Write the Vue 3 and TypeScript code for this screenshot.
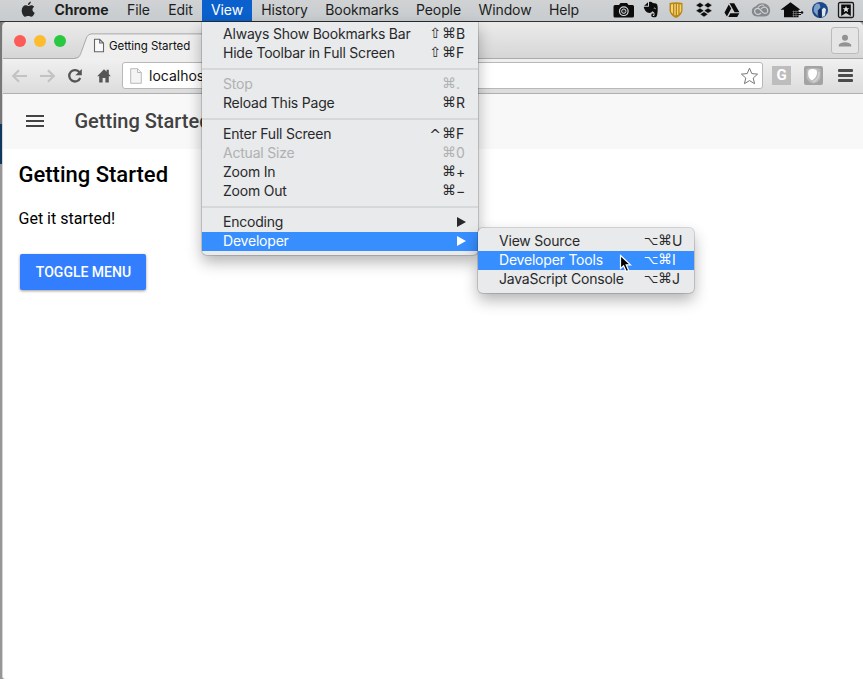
<script setup lang="ts">
interface MenuTitle {
  label: string
  width: number
  kind?: 'app' | 'open'
}

interface MenuRow {
  label?: string
  mods?: string[]
  key?: string
  disabled?: boolean
  active?: boolean
  submenu?: boolean
  separator?: boolean
}

const titles: MenuTitle[] = [
  { label: 'Chrome', width: 73, kind: 'app' },
  { label: 'File', width: 41 },
  { label: 'Edit', width: 43 },
  { label: 'View', width: 50, kind: 'open' },
  { label: 'History', width: 65 },
  { label: 'Bookmarks', width: 90 },
  { label: 'People', width: 63 },
  { label: 'Window', width: 70 },
  { label: 'Help', width: 48 },
]

const viewMenu: MenuRow[] = [
  { label: 'Always Show Bookmarks Bar', mods: ['⇧', '⌘'], key: 'B' },
  { label: 'Hide Toolbar in Full Screen', mods: ['⇧', '⌘'], key: 'F' },
  { separator: true },
  { label: 'Stop', mods: ['⌘'], key: '.', disabled: true },
  { label: 'Reload This Page', mods: ['⌘'], key: 'R' },
  { separator: true },
  { label: 'Enter Full Screen', mods: ['^', '⌘'], key: 'F' },
  { label: 'Actual Size', mods: ['⌘'], key: '0', disabled: true },
  { label: 'Zoom In', mods: ['⌘'], key: '+' },
  { label: 'Zoom Out', mods: ['⌘'], key: '−' },
  { separator: true },
  { label: 'Encoding', submenu: true },
  { label: 'Developer', submenu: true, active: true },
]

const developerMenu: MenuRow[] = [
  { label: 'View Source', mods: ['⌥', '⌘'], key: 'U' },
  { label: 'Developer Tools', mods: ['⌥', '⌘'], key: 'I', active: true },
  { label: 'JavaScript Console', mods: ['⌥', '⌘'], key: 'J' },
]
</script>

<template>
  <div class="screen">
    <header class="menubar">
      <svg class="apple" width="14" height="17" viewBox="0 0 14 17">
        <path d="M9.9 0.6C9.9 2.5 8.5 4 6.9 4.1 6.8 2.4 8.3 0.8 9.9 0.6Z" />
        <path d="M7.1 5C7.8 5 8.7 4.2 10.2 4.2c1.3 0 2.4.7 3 1.6-2.6 1.6-2.1 5 .5 6-.7 1.9-2 4-3.5 4-1.100 0-1.600-.7-3-.7s-2 .7-3 .7C2.500 15.800.700 12.500.700 9.500c0-3.200 2-5.200 4-5.200C5.700 4.300 6.500 5 7.100 5Z" />
      </svg>
      <nav class="titles">
        <span v-for="t in titles" :key="t.label" class="title" :class="t.kind" :style="{ width: t.width + 'px' }">{{ t.label }}</span>
      </nav>
      <div class="tray">
        <svg width="22" height="18" viewBox="0 0 22 18">
          <path d="M2 4H6L7.500 2H14L15.500 4H19.500Q21 4 21 5.500V15Q21 16.500 19.500 16.500H2Q.500 16.500.500 15V5.500Q.500 4 2 4Z" />
          <circle cx="10.800" cy="10.200" r="4.300" fill="none" stroke="#d4d7da" stroke-width="1.200" />
          <circle cx="10.800" cy="10.200" r="2.200" fill="#2c2c2c" stroke="#d4d7da" stroke-width="1" />
        </svg>
        <svg class="elephant" width="16" height="18" viewBox="0 0 16 18">
          <path d="M5 1.200V4.800H1.200ZM6 .900Q9 .500 9.700 2L13 2.600Q14.600 3 14.700 7 14.800 16.300 12.300 16.300H10.200Q8.100 16.300 8.200 14 8.400 12.300 10.500 12.300V13.900H9.800V15H11.200Q12.200 12.800 11 11.300L9.200 10.300Q8.800 12 6.500 12 1.800 11.700.700 5.800H5.600L6 5.300Z" />
          <path d="M10.800 7.500Q11.700 6.400 12.700 7.800" fill="none" stroke="#cfd2d5" stroke-width=".9" />
        </svg>
        <svg class="shield" width="16" height="18" viewBox="0 0 16 18">
          <path d="M1.500 2Q8 .500 14.500 2V10Q13.500 14.500 8 17 2.500 14.500 1.500 10Z" fill="#b98517" />
          <path d="M3 3.400V10.800L5 13V3.100ZM6.300 3V14.200H7.700V2.900ZM9 2.900V14.200L10.300 13.600V3ZM11.600 3.200V12.400L13.200 10.300V3.400Z" fill="#f5d274" />
        </svg>
        <svg class="box" width="18" height="18" viewBox="0 0 18 18">
          <path d="M5 1.500 9 4.200 5 6.900.800 4.200ZM13 1.500 17.200 4.200 13 6.900 9 4.200ZM5 7.100 9 9.700 5 12.300.800 9.700ZM13 7.100 17.200 9.700 13 12.300 9 9.700ZM5 13.200 9 10.700 13 13.200 9 16Z" stroke="#cfd2d5" stroke-width=".5" />
        </svg>
        <svg class="drive" width="18" height="18" viewBox="0 0 18 18">
          <path d="M6.500 2.200H11.200L16.400 11.300H11.600ZM5.800 3.400 8.200 7.600 3.900 15.600 1.500 11.600ZM7.400 12.300H16.300L14.200 16H5.300Z" />
        </svg>
        <svg class="cloud" width="20" height="18" viewBox="0 0 20 18">
          <path d="M6 15.500Q.800 15 .800 10.200 1 6.200 5 5.300 7 2.300 11 2.300 18.800 2.800 19.200 9 19 15.500 13.500 15.500Z" fill="#85898c" />
          <path d="M10 12Q7.300 14.300 5 12.700 2.600 10.500 4.400 8.200 6.600 6.500 9 8.500L12.200 11.800Q14.800 13.500 16.500 11 17.500 7.500 14.400 6.200 12 5.500 10 8M7 6.500Q9.500 2.900 13 4.500" fill="none" stroke="#d0d3d6" stroke-width="1.200" />
        </svg>
        <svg width="24" height="18" viewBox="0 0 24 18">
          <path d="M10.500 1.200 20.500 8.700H18.500V16.300H4V8.700H.500Z" />
          <path d="M12.500 10.500H18M12.500 12.500H18M12.500 14.500H18M13.500 9.500V16M16 9.500V16" stroke="#8a8c8e" stroke-width=".6" />
          <path d="M18 11.500H23M18 13.500H21" stroke="#111" />
          <circle cx="22" cy="11.500" r="1.300" />
        </svg>
        <svg class="globe" width="18" height="18" viewBox="0 0 18 18">
          <circle cx="9" cy="9" r="8" fill="#1d4887" />
          <path d="M5.500 2.500Q2 5.500 2.800 10.500L6.500 15Q7 12 6.800 9.500L9.500 6.300 8.500 3Z" fill="#7d9fca" />
          <path d="M10.800 8.500 13 6.600 15 8.300 14 14.500 11.200 16.300Z" fill="#dbe5ef" />
          <path d="M7 9.500 10.400 7.500V17H8Z" fill="#112d59" />
        </svg>
        <svg class="bookmark" width="18" height="18" viewBox="0 0 18 18">
          <rect x="1.500" y="1.500" width="15" height="15" rx="1.500" fill="none" stroke="#1b1b1b" stroke-width="1.300" />
          <path d="M4.200 3.400H13.800V15L9 12 4.200 15Z" />
          <path d="M9 4.900 10 7.300H12.500L10.500 8.800 11.200 11.200 9 9.800 6.800 11.200 7.500 8.800 5.500 7.300H8Z" fill="#e1e3e5" />
        </svg>
      </div>
    </header>

    <div class="desktop">
      <aside class="behind"></aside>
      <main class="window">
        <div class="tabstrip">
          <div class="lights"><i class="red"></i><i class="yellow"></i><i class="green"></i></div>
          <div class="tab">
            <svg class="tabshape" width="340" height="26" viewBox="0 0 340 26">
              <path d="M0 25.500C5 25 5 22 7 17L11 6Q12.500.900 17 .900H340V26H0Z" fill="#efefef" />
              <path d="M0 25C5 25 5 22 7 17L11 6Q12.500.900 17 .900H340" fill="none" stroke="#a8a8a8" />
            </svg>
            <svg width="12" height="15" viewBox="0 0 12 15">
              <path d="M1.500 1.300H6.700L10.500 5V13.700H1.500ZM6.700 1.300V5H10.500" fill="#fafafa" stroke="#666" stroke-width="1.100" />
            </svg>
            <span class="tabname">Getting Started</span>
          </div>
          <div class="profile">
            <svg width="14" height="14" viewBox="0 0 14 14">
              <circle cx="7" cy="3.700" r="3" />
              <path d="M.800 12.500V10.800Q2.500 8.200 7 8.200T13.200 10.800V12.500Z" />
            </svg>
          </div>
        </div>
        <div class="toolbar">
          <svg width="17" height="16" viewBox="0 0 17 16" class="faint">
            <path d="M16 8H3M8 2.200 2.200 8 8 13.800" />
          </svg>
          <svg width="17" height="16" viewBox="0 0 17 16" class="faint">
            <path d="M1 8H14M9 2.200 14.800 8 9 13.800" />
          </svg>
          <svg width="16" height="16" viewBox="0 0 16 16">
            <path d="M12.600 4.500A5.700 5.700 0 1 0 13.200 10" fill="none" stroke="#555" stroke-width="2.300" />
            <path d="M14.800.900V7.300H8.400Z" fill="#555" />
          </svg>
          <svg width="14" height="14" viewBox="0 0 14 14">
            <path d="M7 .200 9.600 2.800V.800H11.800V5L13.800 7.300H11.800V13.600H8.400V9H5.600V13.600H2.200V7.300H.200Z" fill="#555" />
          </svg>
          <div class="address">
            <svg width="12" height="16" viewBox="0 0 12 16">
              <path d="M.700.700H7.500L11.300 4.500V15.300H.700ZM7.500.700V4.500H11.300" fill="#f4f4f4" stroke="#b9b9b9" />
            </svg>
            <span class="url">localhost</span>
            <svg class="star" width="19" height="18" viewBox="0 0 19 18">
              <path d="M9.500 1.200 11.800 6.600 17.600 7.100 13.200 11 14.600 16.700 9.500 13.600 4.400 16.700 5.800 11 1.400 7.100 7.200 6.600Z" />
            </svg>
          </div>
          <div class="ext letter">G</div>
          <div class="ext">
            <svg width="19" height="19" viewBox="0 0 19 19">
              <rect width="19" height="19" rx="2" fill="#a3a3a3" />
              <path d="M2.500 3Q9 1 16.500 3V12Q14 17 9.500 17.500 5 17 2.500 12Z" fill="#bcbcbc" />
              <path d="M4.500 4.500Q8 2 12.500 4 14 8 11 12L8 14.500Q3 11.500 4.500 4.500Z" fill="#fff" />
              <path d="M15 6Q15.500 13 9 16" fill="none" stroke="#d2d2d2" stroke-width="1.500" />
            </svg>
          </div>
          <div class="burger"><i></i><i></i><i></i></div>
        </div>

        <div class="appbar">
          <div class="nav-icon"><i></i><i></i><i></i></div>
          <span>Getting Started</span>
        </div>
        <section class="content">
          <h1>Getting Started</h1>
          <p>Get it started!</p>
          <button type="button">TOGGLE MENU</button>
        </section>
      </main>
    </div>

    <div class="menu view-menu">
      <template v-for="(row, n) in viewMenu" :key="n">
        <div v-if="row.separator" class="separator"></div>
        <div v-else class="row" :class="{ disabled: row.disabled, active: row.active }">
          <span class="label">{{ row.label }}</span>
          <svg v-if="row.submenu" class="arrow" width="9" height="10" viewBox="0 0 9 10"><path d="M0 0 9 5 0 10Z" /></svg>
          <template v-else>
            <span v-for="m in row.mods" :key="m" class="mod" :class="{ caret: m === '^' }">{{ m }}</span>
            <span class="key">{{ row.key }}</span>
          </template>
        </div>
      </template>
    </div>

    <div class="menu dev-menu">
      <div v-for="row in developerMenu" :key="row.label" class="row" :class="{ active: row.active }">
        <span class="label">{{ row.label }}</span>
        <span v-for="m in row.mods" :key="m" class="mod" :class="{ option: m === '⌥' }">{{ m }}</span>
        <span class="key">{{ row.key }}</span>
      </div>
    </div>

    <svg class="pointer" width="14" height="20" viewBox="0 0 14 20">
      <path d="M1.500 1.500V14.500L4.600 11.700 7.200 17.600 9.700 16.500 7.200 10.800H11.500Z" fill="#000" stroke="#fff" stroke-width="1.200" />
    </svg>
  </div>
</template>

<style>
body {
  overflow: hidden;
}
</style>

<style scoped>
.screen {
  position: relative;
  width: 863px;
  height: 679px;
  overflow: hidden;
  display: flex;
  flex-direction: column;
  font-family: Inter, 'Liberation Sans', sans-serif;
  background: #fff;
  box-sizing: border-box;
}
.screen * {
  box-sizing: border-box;
}
svg {
  display: block;
  flex: none;
}
.menubar {
  height: 22px;
  flex: none;
  display: flex;
  background: linear-gradient(#d0d2d4, #c8cccf);
  border-bottom: 1px solid #303234;
}
.apple {
  margin: 1px 10px 0 21px;
  fill: #262829;
}
.titles {
  display: flex;
}
.title {
  height: 21px;
  line-height: 20px;
  text-align: center;
  font-size: 14px;
  letter-spacing: -0.1px;
  color: #1c1e20;
  white-space: nowrap;
}
.title.app {
  font-weight: 700;
  letter-spacing: 0;
}
.title.open {
  background: #0a60cc;
  color: #fff;
}
.tray {
  margin-left: 25px;
  display: flex;
  gap: 9px;
  padding-top: 1px;
  fill: #0c0c0c;
}
.elephant {
  margin-left: -1px;
}
.box {
  margin-left: 2px;
}
.drive,
.cloud {
  margin-left: 1px;
}
.globe {
  margin-left: -2px;
}
.bookmark {
  margin-left: -1px;
}
.desktop {
  flex: 1;
  display: flex;
  background: #909294;
}
.behind {
  width: 2px;
  flex: none;
  background: linear-gradient(#777 0 102px, #12375d 102px 142px, #969696 142px);
}
.window {
  flex: 1;
  background: #fff;
  border-left: 1px solid #d6d6d6;
  border-radius: 5px 5px 0 3px;
  overflow: hidden;
}
.tabstrip {
  height: 37px;
  display: flex;
  background: linear-gradient(#ebebeb, #d6d6d6);
  border-bottom: 1px solid #aaa;
}
.lights {
  display: flex;
  gap: 8px;
  padding: 13px 0 0 11px;
}
.lights i {
  width: 12px;
  height: 12px;
  border-radius: 50%;
}
.red {
  background: #fc5b57;
}
.yellow {
  background: #fdbc2e;
}
.green {
  background: #28c840;
}
.tab {
  position: relative;
  display: flex;
  gap: 4px;
  padding: 16px 0 0 18px;
  margin-left: 9px;
  width: 340px;
}
.tabshape {
  position: absolute;
  left: 0;
  top: 11px;
}
.tab > svg:not(.tabshape),
.tabname {
  position: relative;
}
.tabname {
  font-size: 11.500px;
  line-height: 17px;
  letter-spacing: -0.05px;
  color: #111;
}
.profile {
  margin: 5px 4px 0 auto;
  width: 28px;
  height: 27px;
  border: 1px solid #bbb;
  border-radius: 3px;
  background: #e5e5e5;
  display: flex;
  align-items: center;
  justify-content: center;
  fill: #929292;
}
.toolbar {
  height: 35px;
  display: flex;
  align-items: center;
  padding: 0 9px 1px 8px;
  background: linear-gradient(#f0f0f0, #dcdcdc);
  border-bottom: 1px solid #b0b0b0;
}
.toolbar > svg:nth-of-type(2) {
  margin-left: 11px;
}
.toolbar > svg:nth-of-type(3) {
  margin-left: 11px;
}
.toolbar > svg:nth-of-type(4) {
  margin-left: 14px;
}
.faint path {
  fill: none;
  stroke: #c3c3c3;
  stroke-width: 2.200px;
}
.address {
  margin-left: 11px;
  width: 641px;
  height: 27px;
  display: flex;
  align-items: center;
  padding: 0 3px 0 7px;
  background: #fff;
  border: 1px solid #b8b8b8;
  border-radius: 3px;
}
.url {
  margin-left: 7px;
  font-size: 14px;
  color: #111;
}
.star {
  margin-left: auto;
  fill: #fff;
  stroke: #777;
}
.ext {
  width: 19px;
  height: 19px;
  margin-left: 13px;
}
.ext.letter {
  margin-left: 9px;
  background: #bdbdbd;
  color: #fff;
  font: 700 15px/19px Roboto, sans-serif;
  text-align: center;
}
.burger {
  margin-left: 15px;
  width: 15px;
  display: flex;
  flex-direction: column;
  gap: 2px;
}
.burger i {
  height: 3px;
  border-radius: 1px;
  background: #4b4b4b;
}
.appbar {
  height: 55px;
  display: flex;
  align-items: center;
  padding-left: 22.500px;
  background: #f8f8f8;
  font: 500 20px/55px Roboto, sans-serif;
  color: #424242;
}
.nav-icon {
  width: 18px;
  margin: -1px 31px 0 0;
  display: flex;
  flex-direction: column;
  gap: 3px;
}
.nav-icon i {
  height: 2px;
  background: #444;
}
.content {
  padding: 13px 0 0 15.500px;
  font-family: Roboto, sans-serif;
  color: #000;
}
h1 {
  margin: 0;
  font-size: 22px;
  line-height: 26px;
  font-weight: 500;
}
p {
  margin: 21px 0 0;
  font-size: 16px;
  line-height: 20px;
}
button {
  display: block;
  margin: 25px 0 0 1.500px;
  width: 126px;
  height: 36px;
  padding: 0 0 0 1px;
  border: 0;
  border-radius: 2px;
  background: #327eff;
  color: #fff;
  font: 500 14px/36px Roboto, sans-serif;
  box-shadow: 0 1px 3px rgba(0, 0, 0, 0.4);
}
.menu {
  position: absolute;
  padding: 4px 0;
  background: #e8eaeb;
  box-shadow: 0 0 0 1px rgba(0, 0, 0, 0.14), 0 7px 15px rgba(0, 0, 0, 0.3);
}
.view-menu {
  left: 202px;
  top: 22px;
  width: 276px;
  padding-top: 3px;
  border-radius: 0 0 5px 5px;
}
.dev-menu {
  left: 478px;
  top: 228px;
  width: 216px;
  border-radius: 5px;
}
.row {
  height: 19px;
  display: flex;
  align-items: center;
  padding: 0 11px 2px 21px;
  font-size: 14px;
  line-height: 17px;
  color: #28292a;
  white-space: nowrap;
}
.row.disabled {
  color: #afb1b2;
}
.row.active {
  background: #378eff;
  color: #fff;
}
.label {
  margin-right: auto;
  letter-spacing: -0.21px;
}
.mod {
  width: 14px;
  font-family: 'DejaVu Sans', sans-serif;
  font-size: 14px;
  text-align: center;
}
.mod.caret {
  padding-top: 4px;
}
.mod.option {
  width: 13px;
  margin-right: 1px;
  font-size: 12.500px;
}
.key {
  width: 11px;
}
.arrow {
  margin: 1px 1px 0 0;
  fill: currentColor;
}
.separator {
  height: 12px;
  padding-top: 5px;
}
.separator::before {
  content: '';
  display: block;
  height: 2px;
  background: #d5d7d8;
}
.pointer {
  position: absolute;
  left: 619px;
  top: 254px;
}
</style>
